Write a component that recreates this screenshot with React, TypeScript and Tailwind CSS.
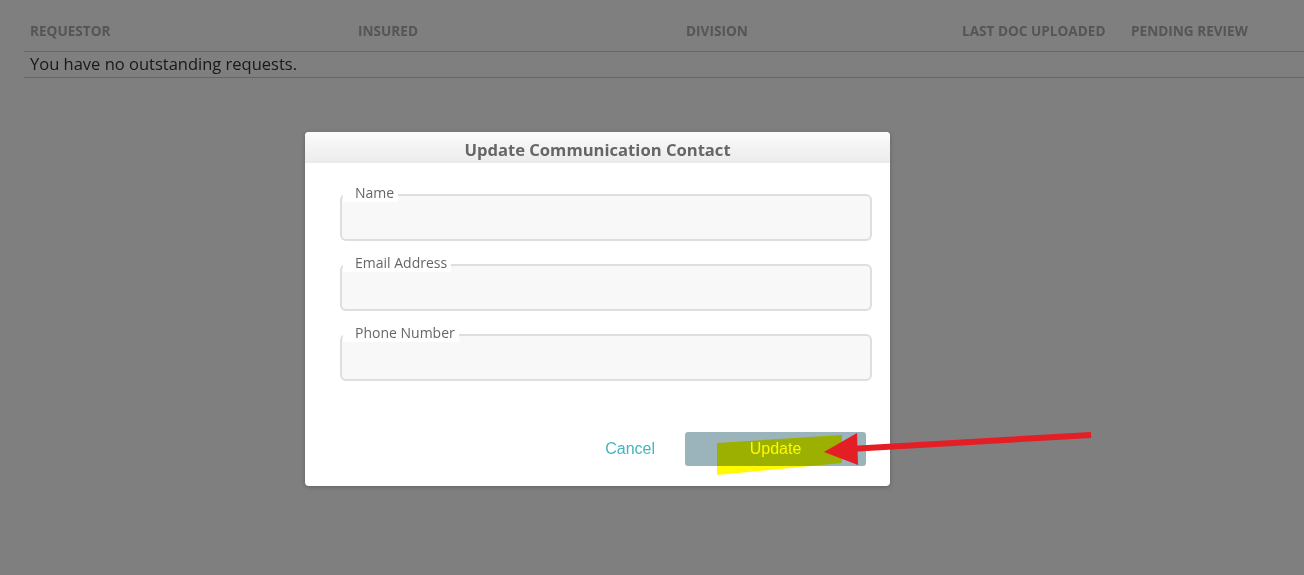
import React from "react";

const cols = [
  { label: "REQUESTOR", w: "w-[328px]" },
  { label: "INSURED", w: "w-[328px]" },
  { label: "DIVISION", w: "w-[276px]" },
  { label: "LAST DOC UPLOADED", w: "w-[169px]" },
  { label: "PENDING REVIEW", w: "flex-1" },
];

function Field({ label }: { label: string }) {
  return (
    <div className="relative h-[47px] rounded-[6px] border-2 border-[#dedede] bg-[#f8f8f8]">
      <span className="absolute -top-[12px] left-[1px] bg-white pl-[12px] pr-[4px] text-[14px] leading-[18px] text-[#666]">
        {label}
      </span>
    </div>
  );
}

export default function App() {
  return (
    <div
      className="relative h-[575px] w-[1304px] overflow-hidden bg-white"
      style={{ fontFamily: '"Open Sans", "Noto Sans", sans-serif' }}
    >
      {/* page behind */}
      <div className="pl-6">
        <div className="flex h-[52px] items-end border-b border-[#cccccc] pb-[11px]">
          {cols.map((c) => (
            <div
              key={c.label}
              className={`${c.w} pl-[6px] text-[13.6px] font-bold leading-[18px] text-[#aaaaaa]`}
            >
              {c.label}
            </div>
          ))}
        </div>
        <div className="flex h-[26px] items-center border-b border-[#cccccc] pl-[6px] text-[16.5px] text-[#333]">
          You have no outstanding requests.
        </div>
      </div>

      {/* overlay */}
      <div className="absolute inset-0 bg-black/50" />

      {/* modal */}
      <div className="absolute left-[305px] top-[132px] flex h-[354px] w-[585px] flex-col overflow-hidden rounded-[4px] bg-white shadow-[0_1px_4px_rgba(0,0,0,0.25)]">
        <div className="flex h-[31px] items-center justify-center bg-gradient-to-b from-[#fbfbfb] to-[#ebebeb] pt-[6px] text-[16.6px] font-bold text-[#666]">
          Update Communication Contact
        </div>
        <div className="flex flex-col gap-[23px] pl-[35px] pr-[18px] pt-[31px]">
          <Field label="Name" />
          <Field label="Email Address" />
          <Field label="Phone Number" />
        </div>
        <div
          className="mt-auto flex items-center justify-end gap-[30px] pb-[20px] pr-[24px]"
          style={{ fontFamily: '"Liberation Sans", Arial, sans-serif' }}
        >
          <span className="text-[16px] text-[#47b3bd]">Cancel</span>
          <div className="flex h-[34px] w-[181px] items-center justify-center rounded-[3px] bg-[#9bb4bc] text-[16px] text-white">
            Update
          </div>
        </div>
      </div>

      {/* annotations */}
      <svg
        className="pointer-events-none absolute inset-0"
        width="1304"
        height="575"
        viewBox="0 0 1304 575"
      >
        <polygon
          points="717,443 842,435 842,463 717,475"
          fill="#fffa00"
          style={{ mixBlendMode: "multiply" }}
        />
        <line x1="1091" y1="435" x2="850" y2="449" stroke="#e31e24" strokeWidth="6" />
        <polygon points="824,452 857,433 858,465" fill="#e31e24" />
      </svg>
    </div>
  );
}
